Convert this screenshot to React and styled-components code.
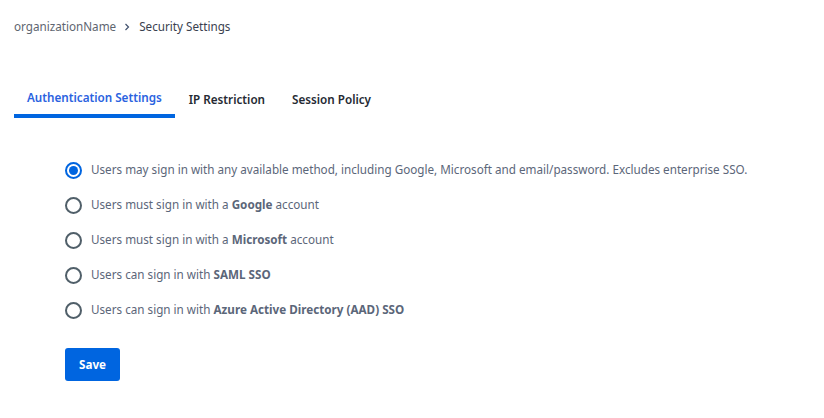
import React from "react";
import styled, { createGlobalStyle } from "styled-components";

const Global = createGlobalStyle`
  html, body { margin: 0; padding: 0; background: #fff; }
  body { font-family: "Noto Sans", sans-serif; font-size: 11.68px; color: #5b6679; }
`;

const Page = styled.div`
  width: 824px;
  height: 418px;
  box-sizing: border-box;
  padding: 18px 14px 0;
  overflow: hidden;
`;

const Breadcrumbs = styled.nav`
  display: flex;
  align-items: center;
  height: 18px;
  line-height: 18px;
`;

const Crumb = styled.span`
  color: ${(p) => (p.$current ? "#3a3f4f" : "#5e6570")};
`;

const Chevron = styled.svg`
  width: 6px;
  height: 8px;
  margin: 0 9px 0 8px;
  fill: none;
  stroke: #42526e;
  stroke-width: 1.2;
`;

const Tabs = styled.div`
  display: flex;
  gap: 1px;
  margin-top: 44px;
`;

const Tab = styled.button`
  border: 0;
  background: none;
  font: 600 11.68px/18px "Noto Sans", sans-serif;
  height: 38px;
  padding: 0 13px;
  box-sizing: border-box;
  color: ${(p) => (p.$active ? "#2a62e0" : "#252a33")};
  border-bottom: 4px solid ${(p) => (p.$active ? "#0065e0" : "transparent")};
  padding-top: ${(p) => (p.$active ? "1px" : "5px")};
`;

const Options = styled.div`
  display: flex;
  flex-direction: column;
  gap: 15px;
  margin: 42px 0 0 51px;
`;

const Option = styled.label`
  display: flex;
  align-items: center;
  gap: 9px;
  height: 20px;
  line-height: 20px;
  b { font-weight: 700; }
`;

const Radio = styled.span`
  width: 17px;
  height: 17px;
  box-sizing: border-box;
  border-radius: 50%;
  border: 2px solid ${(p) => (p.$checked ? "#0065e0" : "#505f69")};
  display: flex;
  align-items: center;
  justify-content: center;
  &::after {
    content: "";
    display: ${(p) => (p.$checked ? "block" : "none")};
    width: 9px;
    height: 9px;
    border-radius: 50%;
    background: #0065e0;
  }
`;

const SaveButton = styled.button`
  display: block;
  margin: 28px 0 0 51px;
  width: 55px;
  height: 33px;
  padding: 0 0 1px;
  border: 0;
  border-radius: 3px;
  background: #0065e0;
  color: #fff;
  font: 700 11.68px "Noto Sans", sans-serif;
`;

const options = [
  { checked: true, body: <>Users may sign in with any available method, including Google, Microsoft and email/password. Excludes enterprise SSO.</> },
  { body: <>Users must sign in with a <b>Google</b> account</> },
  { body: <>Users must sign in with a <b>Microsoft</b> account</> },
  { body: <>Users can sign in with <b>SAML SSO</b></> },
  { body: <>Users can sign in with <b>Azure Active Directory (AAD) SSO</b></> },
];

export default function App() {
  return (
    <Page>
      <Global />
      <Breadcrumbs>
        <Crumb>organizationName</Crumb>
        <Chevron viewBox="0 0 6 8"><path d="M1.5 1 L4.5 4 L1.5 7" /></Chevron>
        <Crumb $current>Security Settings</Crumb>
      </Breadcrumbs>
      <Tabs>
        <Tab $active>Authentication Settings</Tab>
        <Tab>IP Restriction</Tab>
        <Tab>Session Policy</Tab>
      </Tabs>
      <Options>
        {options.map((o, i) => (
          <Option key={i}>
            <Radio $checked={o.checked} />
            <span>{o.body}</span>
          </Option>
        ))}
      </Options>
      <SaveButton>Save</SaveButton>
    </Page>
  );
}
